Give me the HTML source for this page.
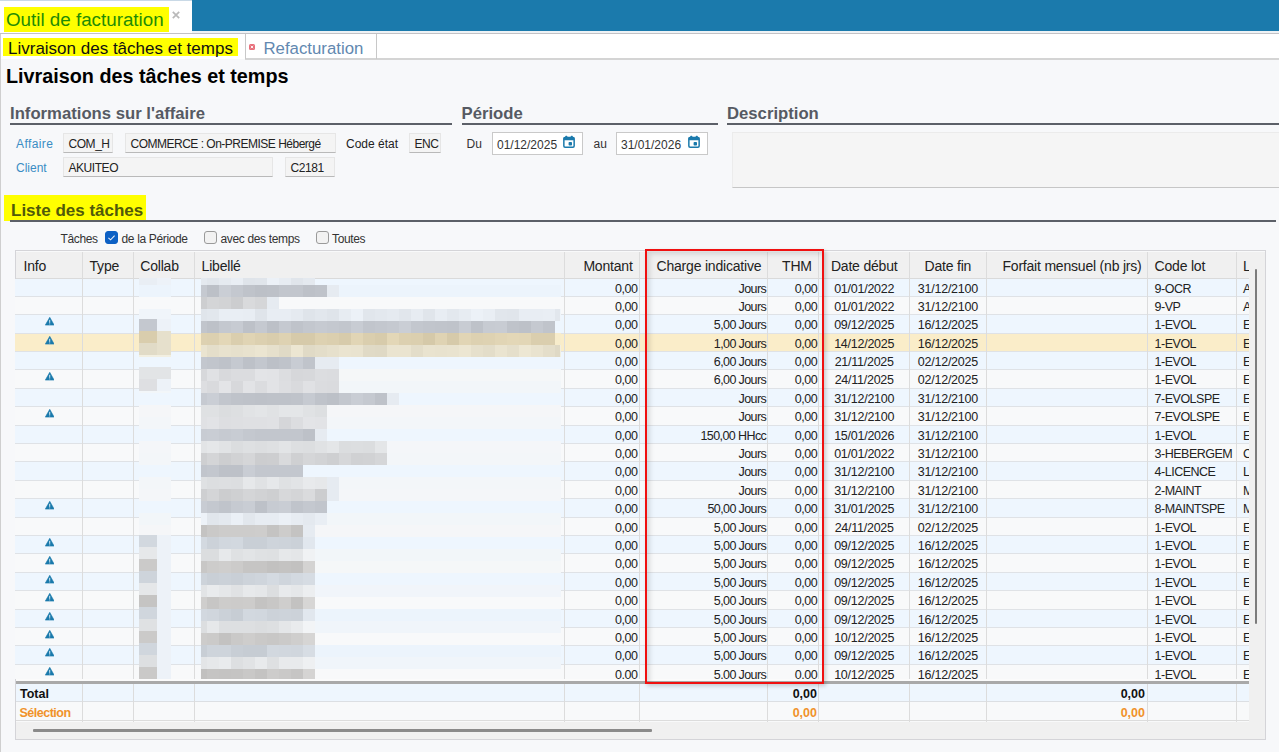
<!DOCTYPE html>
<html><head><meta charset="utf-8"><style>
*{margin:0;padding:0;box-sizing:border-box}
html,body{width:1279px;height:752px;overflow:hidden;background:#f7f8fa;font-family:"Liberation Sans",sans-serif;color:#333}
.a{position:absolute}
i{position:absolute;display:block}
.topbar{left:0;top:0;width:1279px;height:31px;background:#1b7aac}
.tab1{left:0;top:0;width:192px;height:33px;background:#fff;border-top:1px solid #c9d9e6}
.hl{background:#ffff00}
.row{position:absolute;left:15px;width:1234px;height:18.37px;border-bottom:1px solid #dfe2e6}
.row .c,.row .ic{position:absolute;top:0;height:18px;line-height:19px;font-size:12.5px;letter-spacing:-0.25px;white-space:nowrap;color:#222}
.row .c{top:1px}
.row .c{margin-left:-15px}
.row .ic{margin-left:-15px;text-align:center}
.row .ic svg{position:absolute;left:29.8px;top:2px}
.r{text-align:right}
.ctr{text-align:center}
.h{position:absolute;top:253px;height:26px;line-height:27px;font-size:14px;letter-spacing:-0.2px;white-space:nowrap;color:#222}
.vl{width:1px;background:#dcdcdc}
.ro{position:absolute;height:20px;background:#f4f4f4;border:1px solid #e6e6e6;border-bottom:1px solid #b9b9b9;font-size:12px;line-height:21.5px;padding-left:4.5px;color:#222;white-space:nowrap;letter-spacing:-0.45px}
.lbl{position:absolute;font-size:12px;line-height:14px;white-space:nowrap;margin-top:1.5px}
.sec{position:absolute;font-weight:bold;font-size:16.7px;color:#565a63;line-height:20px;white-space:nowrap;margin-top:1.5px}
.ul{height:2px;background:#5c6068}
.date{position:absolute;height:23px;background:#fff;border:1px solid #c9c9c9;font-size:12px;line-height:24px;padding-left:4px;white-space:nowrap}
.date svg{position:absolute;right:7px;top:2.3px}
.cb{position:absolute;top:231px;width:13px;height:13px;border:1.2px solid #9a9a9a;border-radius:3px;background:#f2f2f2}
</style></head><body>
<!-- top tab bar -->
<div class="a topbar"></div>
<div class="a tab1"></div>
<div class="a hl" style="left:4px;top:7px;width:165px;height:25px"></div>
<div class="a" style="left:6px;top:7px;font-size:18.8px;line-height:26px;color:#1f8c05;white-space:nowrap">Outil de facturation</div>
<svg class="a" style="left:172px;top:11px" width="8" height="8" viewBox="0 0 8 8"><path d="M0.8 0.8 L7.2 7.2 M7.2 0.8 L0.8 7.2" stroke="#b9b9b9" stroke-width="1.7"/></svg>
<i style="left:192px;top:31px;width:1087px;height:2px;background:#eef2f5"></i>
<i style="left:0;top:33px;width:1279px;height:1px;background:#c2c2c6"></i>
<!-- second tab row -->
<i style="left:0;top:34px;width:1279px;height:25px;background:#fff"></i>
<i style="left:245px;top:58px;width:1034px;height:1.5px;background:#d4d4d4"></i>
<i style="left:0;top:34px;width:1px;height:718px;background:#cfcfcf"></i>
<div class="a hl" style="left:3px;top:38px;width:235px;height:18px"></div>
<div class="a" style="left:8px;top:39px;font-size:17px;line-height:20px;color:#111;white-space:nowrap">Livraison des tâches et temps</div>
<i style="left:245px;top:34px;width:1px;height:25px;background:#c8c8c8"></i>
<i style="left:376px;top:34px;width:1px;height:25px;background:#c8c8c8"></i>
<div class="a" style="left:249px;top:43.5px;width:6px;height:6px;border-radius:1.5px;background:#e8707c"></div>
<svg class="a" style="left:249px;top:43.5px" width="6" height="6" viewBox="0 0 6 6"><path d="M1.8 1.8 L4.2 4.2 M4.2 1.8 L1.8 4.2" stroke="#fff" stroke-width="0.9"/></svg>
<div class="a" style="left:263.5px;top:38.5px;font-size:16.8px;line-height:20px;color:#6288b0;white-space:nowrap">Refacturation</div>
<!-- page heading -->
<div class="a" style="left:6px;top:65px;font-size:19.8px;font-weight:bold;color:#000;line-height:22px;white-space:nowrap">Livraison des tâches et temps</div>
<!-- section headers -->
<div class="sec" style="left:10px;top:102px">Informations sur l'affaire</div>
<i class="ul" style="left:10px;top:122.5px;width:442px"></i>
<div class="sec" style="left:461.5px;top:102px">Période</div>
<i class="ul" style="left:461.5px;top:122.5px;width:256px"></i>
<div class="sec" style="left:727px;top:102px">Description</div>
<i class="ul" style="left:727px;top:122.5px;width:552px"></i>
<!-- affaire fields -->
<div class="lbl" style="left:16px;top:135.5px;color:#3a8dc4;letter-spacing:0.4px">Affaire</div>
<div class="ro" style="left:63px;top:132.5px;width:50px">COM_H</div>
<div class="ro" style="left:125px;top:132.5px;width:211px"><span style="letter-spacing:-0.5px">COMMERCE : On-PREMISE Hébergé</span></div>
<div class="lbl" style="left:346px;top:135px;color:#222">Code état</div>
<div class="ro" style="left:409px;top:132.5px;width:32px">ENC</div>
<div class="lbl" style="left:16px;top:159.5px;color:#3a8dc4">Client</div>
<div class="ro" style="left:63px;top:156.5px;width:210px">AKUITEO</div>
<div class="ro" style="left:285px;top:156.5px;width:50px">C2181</div>
<!-- periode -->
<div class="lbl" style="left:466.5px;top:135.5px">Du</div>
<div class="date" style="left:492px;top:132px;width:91px">01/12/2025<svg width="12" height="13" viewBox="0 0 12 13"><rect x="0.85" y="2.6" width="10.3" height="9.6" rx="1.2" fill="none" stroke="#1b7aac" stroke-width="1.5"/><rect x="0.6" y="2.2" width="10.8" height="3" rx="0.8" fill="#1b7aac"/><rect x="2.4" y="0.8" width="1.8" height="2.5" rx="0.5" fill="#1b7aac"/><rect x="7.9" y="0.8" width="1.8" height="2.5" rx="0.5" fill="#1b7aac"/><rect x="5.6" y="7" width="3.4" height="3.6" rx="0.8" fill="#1b7aac"/></svg></div>
<div class="lbl" style="left:593.5px;top:135.5px">au</div>
<div class="date" style="left:616px;top:132px;width:92px">31/01/2026<svg width="12" height="13" viewBox="0 0 12 13"><rect x="0.85" y="2.6" width="10.3" height="9.6" rx="1.2" fill="none" stroke="#1b7aac" stroke-width="1.5"/><rect x="0.6" y="2.2" width="10.8" height="3" rx="0.8" fill="#1b7aac"/><rect x="2.4" y="0.8" width="1.8" height="2.5" rx="0.5" fill="#1b7aac"/><rect x="7.9" y="0.8" width="1.8" height="2.5" rx="0.5" fill="#1b7aac"/><rect x="5.6" y="7" width="3.4" height="3.6" rx="0.8" fill="#1b7aac"/></svg></div>
<!-- description -->
<div class="a" style="left:732px;top:132px;width:547px;height:56px;background:#f5f5f5;border-top:1px solid #ebebeb;border-bottom:1.5px solid #c6c6c6;border-left:1px solid #ececec"></div>
<!-- liste des taches -->
<div class="a hl" style="left:4px;top:195px;width:142px;height:26px"></div>
<div class="sec" style="left:11px;top:199.5px;font-size:17px;color:#505a0a">Liste des tâches</div>
<i class="ul" style="left:10px;top:220px;width:1266px"></i>
<div class="lbl" style="left:60.5px;top:230.5px;font-size:12px;letter-spacing:-0.35px">Tâches</div>
<div class="cb" style="left:105px;background:#0c60c4;border-color:#0c60c4"><svg width="11" height="11" viewBox="0 0 11 11" style="position:absolute;left:0;top:0"><path d="M2.4 5.8 L4.6 7.8 L8.6 3.6" fill="none" stroke="#e8eef8" stroke-width="1.1"/></svg></div>
<div class="lbl" style="left:121.5px;top:230.5px;font-size:12px;letter-spacing:-0.35px">de la Période</div>
<div class="cb" style="left:204px"></div>
<div class="lbl" style="left:220.5px;top:230.5px;font-size:12px;letter-spacing:-0.35px">avec des temps</div>
<div class="cb" style="left:315.5px"></div>
<div class="lbl" style="left:332px;top:230.5px;font-size:12px;letter-spacing:-0.35px">Toutes</div>
<!-- table frame -->
<div class="a" style="left:14.6px;top:250px;width:1251.4px;height:490px;border:1.4px solid #d4d4d8;background:#f8f9fa"></div>
<i style="left:15.5px;top:251.5px;width:1233px;height:27.5px;background:#f0f0f0;border-bottom:1px solid #dadada"></i>
<i style="left:1249px;top:251.5px;width:15.5px;height:470px;background:#f0f0f0"></i>
<i style="left:1255px;top:269px;width:2.4px;height:355px;background:#7c7c7c;border-radius:1px"></i>
<div class="a" style="left:0;top:0;width:1249px;height:279px;overflow:hidden"><i class="vl" style="left:82.0px;top:251.5px;height:27.5px"></i><i class="vl" style="left:132.8px;top:251.5px;height:27.5px"></i><i class="vl" style="left:194.1px;top:251.5px;height:27.5px"></i><i class="vl" style="left:563.9px;top:251.5px;height:27.5px"></i><i class="vl" style="left:639.1px;top:251.5px;height:27.5px"></i><i class="vl" style="left:767.3px;top:251.5px;height:27.5px"></i><i class="vl" style="left:818.3px;top:251.5px;height:27.5px"></i><i class="vl" style="left:909.1px;top:251.5px;height:27.5px"></i><i class="vl" style="left:985.7px;top:251.5px;height:27.5px"></i><i class="vl" style="left:1147.1px;top:251.5px;height:27.5px"></i><i class="vl" style="left:1236.4px;top:251.5px;height:27.5px"></i>
<span class="h" style="left:23.5px">Info</span><span class="h" style="left:89.5px">Type</span><span class="h" style="left:140.3px">Collab</span><span class="h" style="left:201.6px">Libellé</span><span class="h r" style="left:564.4px;width:68.20000000000005px">Montant</span><span class="h r" style="left:639.6px;width:121.69999999999993px">Charge indicative</span><span class="h r" style="left:767.8px;width:44.0px">THM</span><span class="h ctr" style="left:818.8px;width:90.80000000000007px">Date début</span><span class="h ctr" style="left:909.6px;width:76.60000000000002px">Date fin</span><span class="h r" style="left:986.2px;width:155.39999999999986px">Forfait mensuel (nb jrs)</span><span class="h" style="left:1154.6px">Code lot</span><span class="h" style="left:1242.9px">L</span></div>
<div class="a" style="left:0;top:0;width:1249px;height:679px;overflow:hidden">
<div class="row" style="top:279px;height:18px;background:#eef6fe"><span class="c r" style="left:564.4px;width:73.20000000000005px;letter-spacing:-0.45px">0,00</span><span class="c r" style="left:639.6px;width:126.59999999999994px;letter-spacing:-0.6px">Jours</span><span class="c r" style="left:767.8px;width:49.5px;letter-spacing:-0.45px">0,00</span><span class="c ctr" style="left:818.8px;width:90.80000000000007px">01/01/2022</span><span class="c ctr" style="left:909.6px;width:76.60000000000002px">31/12/2100</span><span class="c" style="left:1154.6px;letter-spacing:-0.5px">9-OCR</span><span class="c" style="left:1242.9px;letter-spacing:-0.25px">A</span></div>
<div class="row" style="top:297px;height:18px;background:#f8f9fa"><span class="c r" style="left:564.4px;width:73.20000000000005px;letter-spacing:-0.45px">0,00</span><span class="c r" style="left:639.6px;width:126.59999999999994px;letter-spacing:-0.6px">Jours</span><span class="c r" style="left:767.8px;width:49.5px;letter-spacing:-0.45px">0,00</span><span class="c ctr" style="left:818.8px;width:90.80000000000007px">01/01/2022</span><span class="c ctr" style="left:909.6px;width:76.60000000000002px">31/12/2100</span><span class="c" style="left:1154.6px;letter-spacing:-0.5px">9-VP</span><span class="c" style="left:1242.9px;letter-spacing:-0.25px">A</span></div>
<div class="row" style="top:315px;height:19px;background:#eef6fe"><span class="ic" style="left:15px;width:67.5px"><svg class="warn" width="9.5" height="8.5" viewBox="0 0 10 9"><path d="M5 0.3 L9.7 8.6 L0.3 8.6 Z" fill="#1a7aac" stroke="#1a7aac" stroke-width="0.6" stroke-linejoin="round"/><rect x="4.55" y="3" width="0.9" height="3.2" fill="#fff"/><rect x="4.55" y="6.9" width="0.9" height="0.9" fill="#fff"/></svg></span><span class="c r" style="left:564.4px;width:73.20000000000005px;letter-spacing:-0.45px">0,00</span><span class="c r" style="left:639.6px;width:126.59999999999994px;letter-spacing:-0.6px">5,00 Jours</span><span class="c r" style="left:767.8px;width:49.5px;letter-spacing:-0.45px">0,00</span><span class="c ctr" style="left:818.8px;width:90.80000000000007px">09/12/2025</span><span class="c ctr" style="left:909.6px;width:76.60000000000002px">16/12/2025</span><span class="c" style="left:1154.6px;letter-spacing:-0.5px">1-EVOL</span><span class="c" style="left:1242.9px;letter-spacing:-0.25px">E</span></div>
<div class="row" style="top:334px;height:18px;background:#faedc9"><span class="ic" style="left:15px;width:67.5px"><svg class="warn" width="9.5" height="8.5" viewBox="0 0 10 9"><path d="M5 0.3 L9.7 8.6 L0.3 8.6 Z" fill="#1a7aac" stroke="#1a7aac" stroke-width="0.6" stroke-linejoin="round"/><rect x="4.55" y="3" width="0.9" height="3.2" fill="#fff"/><rect x="4.55" y="6.9" width="0.9" height="0.9" fill="#fff"/></svg></span><span class="c r" style="left:564.4px;width:73.20000000000005px;letter-spacing:-0.45px">0,00</span><span class="c r" style="left:639.6px;width:126.59999999999994px;letter-spacing:-0.6px">1,00 Jours</span><span class="c r" style="left:767.8px;width:49.5px;letter-spacing:-0.45px">0,00</span><span class="c ctr" style="left:818.8px;width:90.80000000000007px">14/12/2025</span><span class="c ctr" style="left:909.6px;width:76.60000000000002px">16/12/2025</span><span class="c" style="left:1154.6px;letter-spacing:-0.5px">1-EVOL</span><span class="c" style="left:1242.9px;letter-spacing:-0.25px">E</span></div>
<div class="row" style="top:352px;height:18px;background:#eef6fe"><span class="c r" style="left:564.4px;width:73.20000000000005px;letter-spacing:-0.45px">0,00</span><span class="c r" style="left:639.6px;width:126.59999999999994px;letter-spacing:-0.6px">6,00 Jours</span><span class="c r" style="left:767.8px;width:49.5px;letter-spacing:-0.45px">0,00</span><span class="c ctr" style="left:818.8px;width:90.80000000000007px">21/11/2025</span><span class="c ctr" style="left:909.6px;width:76.60000000000002px">02/12/2025</span><span class="c" style="left:1154.6px;letter-spacing:-0.5px">1-EVOL</span><span class="c" style="left:1242.9px;letter-spacing:-0.25px">E</span></div>
<div class="row" style="top:370px;height:19px;background:#f8f9fa"><span class="ic" style="left:15px;width:67.5px"><svg class="warn" width="9.5" height="8.5" viewBox="0 0 10 9"><path d="M5 0.3 L9.7 8.6 L0.3 8.6 Z" fill="#1a7aac" stroke="#1a7aac" stroke-width="0.6" stroke-linejoin="round"/><rect x="4.55" y="3" width="0.9" height="3.2" fill="#fff"/><rect x="4.55" y="6.9" width="0.9" height="0.9" fill="#fff"/></svg></span><span class="c r" style="left:564.4px;width:73.20000000000005px;letter-spacing:-0.45px">0,00</span><span class="c r" style="left:639.6px;width:126.59999999999994px;letter-spacing:-0.6px">6,00 Jours</span><span class="c r" style="left:767.8px;width:49.5px;letter-spacing:-0.45px">0,00</span><span class="c ctr" style="left:818.8px;width:90.80000000000007px">24/11/2025</span><span class="c ctr" style="left:909.6px;width:76.60000000000002px">02/12/2025</span><span class="c" style="left:1154.6px;letter-spacing:-0.5px">1-EVOL</span><span class="c" style="left:1242.9px;letter-spacing:-0.25px">E</span></div>
<div class="row" style="top:389px;height:18px;background:#eef6fe"><span class="c r" style="left:564.4px;width:73.20000000000005px;letter-spacing:-0.45px">0,00</span><span class="c r" style="left:639.6px;width:126.59999999999994px;letter-spacing:-0.6px">Jours</span><span class="c r" style="left:767.8px;width:49.5px;letter-spacing:-0.45px">0,00</span><span class="c ctr" style="left:818.8px;width:90.80000000000007px">31/12/2100</span><span class="c ctr" style="left:909.6px;width:76.60000000000002px">31/12/2100</span><span class="c" style="left:1154.6px;letter-spacing:-0.5px">7-EVOLSPE</span><span class="c" style="left:1242.9px;letter-spacing:-0.25px">E</span></div>
<div class="row" style="top:407px;height:19px;background:#f8f9fa"><span class="ic" style="left:15px;width:67.5px"><svg class="warn" width="9.5" height="8.5" viewBox="0 0 10 9"><path d="M5 0.3 L9.7 8.6 L0.3 8.6 Z" fill="#1a7aac" stroke="#1a7aac" stroke-width="0.6" stroke-linejoin="round"/><rect x="4.55" y="3" width="0.9" height="3.2" fill="#fff"/><rect x="4.55" y="6.9" width="0.9" height="0.9" fill="#fff"/></svg></span><span class="c r" style="left:564.4px;width:73.20000000000005px;letter-spacing:-0.45px">0,00</span><span class="c r" style="left:639.6px;width:126.59999999999994px;letter-spacing:-0.6px">Jours</span><span class="c r" style="left:767.8px;width:49.5px;letter-spacing:-0.45px">0,00</span><span class="c ctr" style="left:818.8px;width:90.80000000000007px">31/12/2100</span><span class="c ctr" style="left:909.6px;width:76.60000000000002px">31/12/2100</span><span class="c" style="left:1154.6px;letter-spacing:-0.5px">7-EVOLSPE</span><span class="c" style="left:1242.9px;letter-spacing:-0.25px">E</span></div>
<div class="row" style="top:426px;height:18px;background:#eef6fe"><span class="c r" style="left:564.4px;width:73.20000000000005px;letter-spacing:-0.45px">0,00</span><span class="c r" style="left:639.6px;width:126.59999999999994px;letter-spacing:-0.6px">150,00 HHcc</span><span class="c r" style="left:767.8px;width:49.5px;letter-spacing:-0.45px">0,00</span><span class="c ctr" style="left:818.8px;width:90.80000000000007px">15/01/2026</span><span class="c ctr" style="left:909.6px;width:76.60000000000002px">31/12/2100</span><span class="c" style="left:1154.6px;letter-spacing:-0.5px">1-EVOL</span><span class="c" style="left:1242.9px;letter-spacing:-0.25px">E</span></div>
<div class="row" style="top:444px;height:18px;background:#f8f9fa"><span class="c r" style="left:564.4px;width:73.20000000000005px;letter-spacing:-0.45px">0,00</span><span class="c r" style="left:639.6px;width:126.59999999999994px;letter-spacing:-0.6px">Jours</span><span class="c r" style="left:767.8px;width:49.5px;letter-spacing:-0.45px">0,00</span><span class="c ctr" style="left:818.8px;width:90.80000000000007px">01/01/2022</span><span class="c ctr" style="left:909.6px;width:76.60000000000002px">31/12/2100</span><span class="c" style="left:1154.6px;letter-spacing:-0.5px">3-HEBERGEM</span><span class="c" style="left:1242.9px;letter-spacing:-0.25px">C</span></div>
<div class="row" style="top:462px;height:19px;background:#eef6fe"><span class="c r" style="left:564.4px;width:73.20000000000005px;letter-spacing:-0.45px">0,00</span><span class="c r" style="left:639.6px;width:126.59999999999994px;letter-spacing:-0.6px">Jours</span><span class="c r" style="left:767.8px;width:49.5px;letter-spacing:-0.45px">0,00</span><span class="c ctr" style="left:818.8px;width:90.80000000000007px">31/12/2100</span><span class="c ctr" style="left:909.6px;width:76.60000000000002px">31/12/2100</span><span class="c" style="left:1154.6px;letter-spacing:-0.5px">4-LICENCE</span><span class="c" style="left:1242.9px;letter-spacing:-0.25px">L</span></div>
<div class="row" style="top:481px;height:18px;background:#f8f9fa"><span class="c r" style="left:564.4px;width:73.20000000000005px;letter-spacing:-0.45px">0,00</span><span class="c r" style="left:639.6px;width:126.59999999999994px;letter-spacing:-0.6px">Jours</span><span class="c r" style="left:767.8px;width:49.5px;letter-spacing:-0.45px">0,00</span><span class="c ctr" style="left:818.8px;width:90.80000000000007px">31/12/2100</span><span class="c ctr" style="left:909.6px;width:76.60000000000002px">31/12/2100</span><span class="c" style="left:1154.6px;letter-spacing:-0.5px">2-MAINT</span><span class="c" style="left:1242.9px;letter-spacing:-0.25px">M</span></div>
<div class="row" style="top:499px;height:19px;background:#eef6fe"><span class="ic" style="left:15px;width:67.5px"><svg class="warn" width="9.5" height="8.5" viewBox="0 0 10 9"><path d="M5 0.3 L9.7 8.6 L0.3 8.6 Z" fill="#1a7aac" stroke="#1a7aac" stroke-width="0.6" stroke-linejoin="round"/><rect x="4.55" y="3" width="0.9" height="3.2" fill="#fff"/><rect x="4.55" y="6.9" width="0.9" height="0.9" fill="#fff"/></svg></span><span class="c r" style="left:564.4px;width:73.20000000000005px;letter-spacing:-0.45px">0,00</span><span class="c r" style="left:639.6px;width:126.59999999999994px;letter-spacing:-0.6px">50,00 Jours</span><span class="c r" style="left:767.8px;width:49.5px;letter-spacing:-0.45px">0,00</span><span class="c ctr" style="left:818.8px;width:90.80000000000007px">31/01/2025</span><span class="c ctr" style="left:909.6px;width:76.60000000000002px">31/12/2100</span><span class="c" style="left:1154.6px;letter-spacing:-0.5px">8-MAINTSPE</span><span class="c" style="left:1242.9px;letter-spacing:-0.25px">M</span></div>
<div class="row" style="top:518px;height:18px;background:#f8f9fa"><span class="c r" style="left:564.4px;width:73.20000000000005px;letter-spacing:-0.45px">0,00</span><span class="c r" style="left:639.6px;width:126.59999999999994px;letter-spacing:-0.6px">5,00 Jours</span><span class="c r" style="left:767.8px;width:49.5px;letter-spacing:-0.45px">0,00</span><span class="c ctr" style="left:818.8px;width:90.80000000000007px">24/11/2025</span><span class="c ctr" style="left:909.6px;width:76.60000000000002px">02/12/2025</span><span class="c" style="left:1154.6px;letter-spacing:-0.5px">1-EVOL</span><span class="c" style="left:1242.9px;letter-spacing:-0.25px">E</span></div>
<div class="row" style="top:536px;height:18px;background:#eef6fe"><span class="ic" style="left:15px;width:67.5px"><svg class="warn" width="9.5" height="8.5" viewBox="0 0 10 9"><path d="M5 0.3 L9.7 8.6 L0.3 8.6 Z" fill="#1a7aac" stroke="#1a7aac" stroke-width="0.6" stroke-linejoin="round"/><rect x="4.55" y="3" width="0.9" height="3.2" fill="#fff"/><rect x="4.55" y="6.9" width="0.9" height="0.9" fill="#fff"/></svg></span><span class="c r" style="left:564.4px;width:73.20000000000005px;letter-spacing:-0.45px">0,00</span><span class="c r" style="left:639.6px;width:126.59999999999994px;letter-spacing:-0.6px">5,00 Jours</span><span class="c r" style="left:767.8px;width:49.5px;letter-spacing:-0.45px">0,00</span><span class="c ctr" style="left:818.8px;width:90.80000000000007px">09/12/2025</span><span class="c ctr" style="left:909.6px;width:76.60000000000002px">16/12/2025</span><span class="c" style="left:1154.6px;letter-spacing:-0.5px">1-EVOL</span><span class="c" style="left:1242.9px;letter-spacing:-0.25px">E</span></div>
<div class="row" style="top:554px;height:19px;background:#f8f9fa"><span class="ic" style="left:15px;width:67.5px"><svg class="warn" width="9.5" height="8.5" viewBox="0 0 10 9"><path d="M5 0.3 L9.7 8.6 L0.3 8.6 Z" fill="#1a7aac" stroke="#1a7aac" stroke-width="0.6" stroke-linejoin="round"/><rect x="4.55" y="3" width="0.9" height="3.2" fill="#fff"/><rect x="4.55" y="6.9" width="0.9" height="0.9" fill="#fff"/></svg></span><span class="c r" style="left:564.4px;width:73.20000000000005px;letter-spacing:-0.45px">0,00</span><span class="c r" style="left:639.6px;width:126.59999999999994px;letter-spacing:-0.6px">5,00 Jours</span><span class="c r" style="left:767.8px;width:49.5px;letter-spacing:-0.45px">0,00</span><span class="c ctr" style="left:818.8px;width:90.80000000000007px">09/12/2025</span><span class="c ctr" style="left:909.6px;width:76.60000000000002px">16/12/2025</span><span class="c" style="left:1154.6px;letter-spacing:-0.5px">1-EVOL</span><span class="c" style="left:1242.9px;letter-spacing:-0.25px">E</span></div>
<div class="row" style="top:573px;height:18px;background:#eef6fe"><span class="ic" style="left:15px;width:67.5px"><svg class="warn" width="9.5" height="8.5" viewBox="0 0 10 9"><path d="M5 0.3 L9.7 8.6 L0.3 8.6 Z" fill="#1a7aac" stroke="#1a7aac" stroke-width="0.6" stroke-linejoin="round"/><rect x="4.55" y="3" width="0.9" height="3.2" fill="#fff"/><rect x="4.55" y="6.9" width="0.9" height="0.9" fill="#fff"/></svg></span><span class="c r" style="left:564.4px;width:73.20000000000005px;letter-spacing:-0.45px">0,00</span><span class="c r" style="left:639.6px;width:126.59999999999994px;letter-spacing:-0.6px">5,00 Jours</span><span class="c r" style="left:767.8px;width:49.5px;letter-spacing:-0.45px">0,00</span><span class="c ctr" style="left:818.8px;width:90.80000000000007px">09/12/2025</span><span class="c ctr" style="left:909.6px;width:76.60000000000002px">16/12/2025</span><span class="c" style="left:1154.6px;letter-spacing:-0.5px">1-EVOL</span><span class="c" style="left:1242.9px;letter-spacing:-0.25px">E</span></div>
<div class="row" style="top:591px;height:19px;background:#f8f9fa"><span class="ic" style="left:15px;width:67.5px"><svg class="warn" width="9.5" height="8.5" viewBox="0 0 10 9"><path d="M5 0.3 L9.7 8.6 L0.3 8.6 Z" fill="#1a7aac" stroke="#1a7aac" stroke-width="0.6" stroke-linejoin="round"/><rect x="4.55" y="3" width="0.9" height="3.2" fill="#fff"/><rect x="4.55" y="6.9" width="0.9" height="0.9" fill="#fff"/></svg></span><span class="c r" style="left:564.4px;width:73.20000000000005px;letter-spacing:-0.45px">0,00</span><span class="c r" style="left:639.6px;width:126.59999999999994px;letter-spacing:-0.6px">5,00 Jours</span><span class="c r" style="left:767.8px;width:49.5px;letter-spacing:-0.45px">0,00</span><span class="c ctr" style="left:818.8px;width:90.80000000000007px">09/12/2025</span><span class="c ctr" style="left:909.6px;width:76.60000000000002px">16/12/2025</span><span class="c" style="left:1154.6px;letter-spacing:-0.5px">1-EVOL</span><span class="c" style="left:1242.9px;letter-spacing:-0.25px">E</span></div>
<div class="row" style="top:610px;height:18px;background:#eef6fe"><span class="ic" style="left:15px;width:67.5px"><svg class="warn" width="9.5" height="8.5" viewBox="0 0 10 9"><path d="M5 0.3 L9.7 8.6 L0.3 8.6 Z" fill="#1a7aac" stroke="#1a7aac" stroke-width="0.6" stroke-linejoin="round"/><rect x="4.55" y="3" width="0.9" height="3.2" fill="#fff"/><rect x="4.55" y="6.9" width="0.9" height="0.9" fill="#fff"/></svg></span><span class="c r" style="left:564.4px;width:73.20000000000005px;letter-spacing:-0.45px">0,00</span><span class="c r" style="left:639.6px;width:126.59999999999994px;letter-spacing:-0.6px">5,00 Jours</span><span class="c r" style="left:767.8px;width:49.5px;letter-spacing:-0.45px">0,00</span><span class="c ctr" style="left:818.8px;width:90.80000000000007px">09/12/2025</span><span class="c ctr" style="left:909.6px;width:76.60000000000002px">16/12/2025</span><span class="c" style="left:1154.6px;letter-spacing:-0.5px">1-EVOL</span><span class="c" style="left:1242.9px;letter-spacing:-0.25px">E</span></div>
<div class="row" style="top:628px;height:18px;background:#f8f9fa"><span class="ic" style="left:15px;width:67.5px"><svg class="warn" width="9.5" height="8.5" viewBox="0 0 10 9"><path d="M5 0.3 L9.7 8.6 L0.3 8.6 Z" fill="#1a7aac" stroke="#1a7aac" stroke-width="0.6" stroke-linejoin="round"/><rect x="4.55" y="3" width="0.9" height="3.2" fill="#fff"/><rect x="4.55" y="6.9" width="0.9" height="0.9" fill="#fff"/></svg></span><span class="c r" style="left:564.4px;width:73.20000000000005px;letter-spacing:-0.45px">0,00</span><span class="c r" style="left:639.6px;width:126.59999999999994px;letter-spacing:-0.6px">5,00 Jours</span><span class="c r" style="left:767.8px;width:49.5px;letter-spacing:-0.45px">0,00</span><span class="c ctr" style="left:818.8px;width:90.80000000000007px">10/12/2025</span><span class="c ctr" style="left:909.6px;width:76.60000000000002px">16/12/2025</span><span class="c" style="left:1154.6px;letter-spacing:-0.5px">1-EVOL</span><span class="c" style="left:1242.9px;letter-spacing:-0.25px">E</span></div>
<div class="row" style="top:646px;height:19px;background:#eef6fe"><span class="ic" style="left:15px;width:67.5px"><svg class="warn" width="9.5" height="8.5" viewBox="0 0 10 9"><path d="M5 0.3 L9.7 8.6 L0.3 8.6 Z" fill="#1a7aac" stroke="#1a7aac" stroke-width="0.6" stroke-linejoin="round"/><rect x="4.55" y="3" width="0.9" height="3.2" fill="#fff"/><rect x="4.55" y="6.9" width="0.9" height="0.9" fill="#fff"/></svg></span><span class="c r" style="left:564.4px;width:73.20000000000005px;letter-spacing:-0.45px">0,00</span><span class="c r" style="left:639.6px;width:126.59999999999994px;letter-spacing:-0.6px">5,00 Jours</span><span class="c r" style="left:767.8px;width:49.5px;letter-spacing:-0.45px">0,00</span><span class="c ctr" style="left:818.8px;width:90.80000000000007px">09/12/2025</span><span class="c ctr" style="left:909.6px;width:76.60000000000002px">16/12/2025</span><span class="c" style="left:1154.6px;letter-spacing:-0.5px">1-EVOL</span><span class="c" style="left:1242.9px;letter-spacing:-0.25px">E</span></div>
<div class="row" style="top:665px;height:18px;background:#f8f9fa"><span class="ic" style="left:15px;width:67.5px"><svg class="warn" width="9.5" height="8.5" viewBox="0 0 10 9"><path d="M5 0.3 L9.7 8.6 L0.3 8.6 Z" fill="#1a7aac" stroke="#1a7aac" stroke-width="0.6" stroke-linejoin="round"/><rect x="4.55" y="3" width="0.9" height="3.2" fill="#fff"/><rect x="4.55" y="6.9" width="0.9" height="0.9" fill="#fff"/></svg></span><span class="c r" style="left:564.4px;width:73.20000000000005px;letter-spacing:-0.45px">0.00</span><span class="c r" style="left:639.6px;width:126.59999999999994px;letter-spacing:-0.6px">5.00 Jours</span><span class="c r" style="left:767.8px;width:49.5px;letter-spacing:-0.45px">0.00</span><span class="c ctr" style="left:818.8px;width:90.80000000000007px">10/12/2025</span><span class="c ctr" style="left:909.6px;width:76.60000000000002px">16/12/2025</span><span class="c" style="left:1154.6px;letter-spacing:-0.5px">1-EVOL</span><span class="c" style="left:1242.9px;letter-spacing:-0.25px">E</span></div>
<i class="vl" style="left:82.0px;top:279px;height:400px"></i><i class="vl" style="left:132.8px;top:279px;height:400px"></i><i class="vl" style="left:194.1px;top:279px;height:400px"></i><i class="vl" style="left:563.9px;top:279px;height:400px"></i><i class="vl" style="left:639.1px;top:279px;height:400px"></i><i class="vl" style="left:767.3px;top:279px;height:400px"></i><i class="vl" style="left:818.3px;top:279px;height:400px"></i><i class="vl" style="left:909.1px;top:279px;height:400px"></i><i class="vl" style="left:985.7px;top:279px;height:400px"></i><i class="vl" style="left:1147.1px;top:279px;height:400px"></i><i class="vl" style="left:1236.4px;top:279px;height:400px"></i>
<i style="left:201px;top:279px;width:360px;height:6px;background:#eef6fe"></i>
<i style="left:139px;top:279px;width:32px;height:6px;background:#eef6fe"></i>
<i style="left:201px;top:285px;width:360px;height:12px;background:#ecf4fc"></i>
<i style="left:139px;top:285px;width:32px;height:12px;background:#ecf4fc"></i>
<i style="left:201px;top:297px;width:360px;height:12px;background:#f8f9fa"></i>
<i style="left:139px;top:297px;width:32px;height:12px;background:#f8f9fa"></i>
<i style="left:201px;top:309px;width:360px;height:12px;background:#f0f5fa"></i>
<i style="left:139px;top:309px;width:32px;height:12px;background:#f0f5fa"></i>
<i style="left:201px;top:321px;width:360px;height:12px;background:#eef6fe"></i>
<i style="left:139px;top:321px;width:32px;height:12px;background:#eef6fe"></i>
<i style="left:201px;top:333px;width:360px;height:12px;background:#f7eccb"></i>
<i style="left:139px;top:333px;width:32px;height:12px;background:#f7eccb"></i>
<i style="left:201px;top:345px;width:360px;height:12px;background:#f2efe1"></i>
<i style="left:139px;top:345px;width:32px;height:12px;background:#f2efe1"></i>
<i style="left:201px;top:357px;width:360px;height:12px;background:#eef6fe"></i>
<i style="left:139px;top:357px;width:32px;height:12px;background:#eef6fe"></i>
<i style="left:201px;top:369px;width:360px;height:12px;background:#f5f7f8"></i>
<i style="left:139px;top:369px;width:32px;height:12px;background:#f5f7f8"></i>
<i style="left:201px;top:381px;width:360px;height:12px;background:#f2f6f9"></i>
<i style="left:139px;top:381px;width:32px;height:12px;background:#f2f6f9"></i>
<i style="left:201px;top:393px;width:360px;height:12px;background:#eef6fe"></i>
<i style="left:139px;top:393px;width:32px;height:12px;background:#eef6fe"></i>
<i style="left:201px;top:405px;width:360px;height:12px;background:#f5f6f8"></i>
<i style="left:139px;top:405px;width:32px;height:12px;background:#f5f6f8"></i>
<i style="left:201px;top:417px;width:360px;height:12px;background:#f3f6f9"></i>
<i style="left:139px;top:417px;width:32px;height:12px;background:#f3f6f9"></i>
<i style="left:201px;top:429px;width:360px;height:12px;background:#eef6fe"></i>
<i style="left:139px;top:429px;width:32px;height:12px;background:#eef6fe"></i>
<i style="left:201px;top:441px;width:360px;height:12px;background:#f4f6f9"></i>
<i style="left:139px;top:441px;width:32px;height:12px;background:#f4f6f9"></i>
<i style="left:201px;top:453px;width:360px;height:12px;background:#f3f6f9"></i>
<i style="left:139px;top:453px;width:32px;height:12px;background:#f3f6f9"></i>
<i style="left:201px;top:465px;width:360px;height:12px;background:#eef6fe"></i>
<i style="left:139px;top:465px;width:32px;height:12px;background:#eef6fe"></i>
<i style="left:201px;top:477px;width:360px;height:12px;background:#f3f6f9"></i>
<i style="left:139px;top:477px;width:32px;height:12px;background:#f3f6f9"></i>
<i style="left:201px;top:489px;width:360px;height:12px;background:#f4f6f9"></i>
<i style="left:139px;top:489px;width:32px;height:12px;background:#f4f6f9"></i>
<i style="left:201px;top:501px;width:360px;height:12px;background:#eef6fe"></i>
<i style="left:139px;top:501px;width:32px;height:12px;background:#eef6fe"></i>
<i style="left:201px;top:513px;width:360px;height:12px;background:#f2f6f9"></i>
<i style="left:139px;top:513px;width:32px;height:12px;background:#f2f6f9"></i>
<i style="left:201px;top:525px;width:360px;height:12px;background:#f5f6f8"></i>
<i style="left:139px;top:525px;width:32px;height:12px;background:#f5f6f8"></i>
<i style="left:201px;top:537px;width:360px;height:12px;background:#eef6fe"></i>
<i style="left:139px;top:537px;width:32px;height:12px;background:#eef6fe"></i>
<i style="left:201px;top:549px;width:360px;height:12px;background:#f2f6f9"></i>
<i style="left:139px;top:549px;width:32px;height:12px;background:#f2f6f9"></i>
<i style="left:201px;top:561px;width:360px;height:12px;background:#f5f7f8"></i>
<i style="left:139px;top:561px;width:32px;height:12px;background:#f5f7f8"></i>
<i style="left:201px;top:573px;width:360px;height:12px;background:#eef6fe"></i>
<i style="left:139px;top:573px;width:32px;height:12px;background:#eef6fe"></i>
<i style="left:201px;top:585px;width:360px;height:12px;background:#f1f5fa"></i>
<i style="left:139px;top:585px;width:32px;height:12px;background:#f1f5fa"></i>
<i style="left:201px;top:597px;width:360px;height:12px;background:#f8f9fa"></i>
<i style="left:139px;top:597px;width:32px;height:12px;background:#f8f9fa"></i>
<i style="left:201px;top:609px;width:360px;height:12px;background:#ecf4fc"></i>
<i style="left:139px;top:609px;width:32px;height:12px;background:#ecf4fc"></i>
<i style="left:201px;top:621px;width:360px;height:12px;background:#f0f5fa"></i>
<i style="left:139px;top:621px;width:32px;height:12px;background:#f0f5fa"></i>
<i style="left:201px;top:633px;width:360px;height:12px;background:#f8f9fa"></i>
<i style="left:139px;top:633px;width:32px;height:12px;background:#f8f9fa"></i>
<i style="left:201px;top:645px;width:360px;height:12px;background:#ecf4fc"></i>
<i style="left:139px;top:645px;width:32px;height:12px;background:#ecf4fc"></i>
<i style="left:201px;top:657px;width:360px;height:12px;background:#f0f5fa"></i>
<i style="left:139px;top:657px;width:32px;height:12px;background:#f0f5fa"></i>
<i style="left:201px;top:669px;width:360px;height:10px;background:#f8f9fa"></i>
<i style="left:139px;top:669px;width:32px;height:10px;background:#f8f9fa"></i>
<i style="left:201px;top:278px;width:6px;height:7px;background:#e4e9ef"></i>
<i style="left:207px;top:278px;width:12px;height:7px;background:#e1e6ec"></i>
<i style="left:219px;top:278px;width:12px;height:7px;background:#e5eaf0"></i>
<i style="left:231px;top:278px;width:12px;height:7px;background:#e9eef4"></i>
<i style="left:243px;top:278px;width:12px;height:7px;background:#dfe4ea"></i>
<i style="left:255px;top:278px;width:12px;height:7px;background:#e0e5eb"></i>
<i style="left:267px;top:278px;width:12px;height:7px;background:#ecf1f7"></i>
<i style="left:279px;top:278px;width:12px;height:7px;background:#e7ecf2"></i>
<i style="left:291px;top:278px;width:12px;height:7px;background:#e0e5eb"></i>
<i style="left:303px;top:278px;width:12px;height:7px;background:#e4e9ef"></i>
<i style="left:201px;top:285px;width:6px;height:12px;background:#c5c9d0"></i>
<i style="left:207px;top:285px;width:12px;height:12px;background:#bcc0c7"></i>
<i style="left:219px;top:285px;width:12px;height:12px;background:#caced5"></i>
<i style="left:231px;top:285px;width:12px;height:12px;background:#c4c8cf"></i>
<i style="left:243px;top:285px;width:12px;height:12px;background:#bfc3ca"></i>
<i style="left:255px;top:285px;width:12px;height:12px;background:#bcc0c7"></i>
<i style="left:267px;top:285px;width:12px;height:12px;background:#bdc1c8"></i>
<i style="left:279px;top:285px;width:12px;height:12px;background:#c2c6cd"></i>
<i style="left:291px;top:285px;width:12px;height:12px;background:#c2c6cd"></i>
<i style="left:303px;top:285px;width:12px;height:12px;background:#bdc1c8"></i>
<i style="left:315px;top:285px;width:12px;height:12px;background:#bfc3ca"></i>
<i style="left:327px;top:285px;width:12px;height:12px;background:#e6ebf1"></i>
<i style="left:201px;top:297px;width:6px;height:12px;background:#cdced0"></i>
<i style="left:207px;top:297px;width:12px;height:12px;background:#d4d5d7"></i>
<i style="left:219px;top:297px;width:12px;height:12px;background:#d2d3d5"></i>
<i style="left:231px;top:297px;width:12px;height:12px;background:#cccdcf"></i>
<i style="left:243px;top:297px;width:12px;height:12px;background:#d9dadc"></i>
<i style="left:255px;top:297px;width:12px;height:12px;background:#d5d6d8"></i>
<i style="left:267px;top:297px;width:12px;height:12px;background:#e6ebf1"></i>
<i style="left:201px;top:309px;width:6px;height:12px;background:#e0e5eb"></i>
<i style="left:207px;top:309px;width:12px;height:12px;background:#e2e7ed"></i>
<i style="left:219px;top:309px;width:12px;height:12px;background:#e9eef4"></i>
<i style="left:231px;top:309px;width:12px;height:12px;background:#e9eef4"></i>
<i style="left:243px;top:309px;width:12px;height:12px;background:#e8edf3"></i>
<i style="left:255px;top:309px;width:12px;height:12px;background:#dfe4ea"></i>
<i style="left:267px;top:309px;width:12px;height:12px;background:#e8edf3"></i>
<i style="left:279px;top:309px;width:12px;height:12px;background:#e8edf3"></i>
<i style="left:291px;top:309px;width:12px;height:12px;background:#e5eaf0"></i>
<i style="left:303px;top:309px;width:12px;height:12px;background:#dfe4ea"></i>
<i style="left:315px;top:309px;width:12px;height:12px;background:#e2e7ed"></i>
<i style="left:327px;top:309px;width:12px;height:12px;background:#dfe4ea"></i>
<i style="left:339px;top:309px;width:12px;height:12px;background:#e7ecf2"></i>
<i style="left:351px;top:309px;width:12px;height:12px;background:#ecf1f7"></i>
<i style="left:363px;top:309px;width:12px;height:12px;background:#e1e6ec"></i>
<i style="left:375px;top:309px;width:12px;height:12px;background:#e3e8ee"></i>
<i style="left:387px;top:309px;width:12px;height:12px;background:#e5eaf0"></i>
<i style="left:399px;top:309px;width:12px;height:12px;background:#e1e6ec"></i>
<i style="left:411px;top:309px;width:12px;height:12px;background:#e7ecf2"></i>
<i style="left:423px;top:309px;width:12px;height:12px;background:#e0e5eb"></i>
<i style="left:435px;top:309px;width:12px;height:12px;background:#e8edf3"></i>
<i style="left:447px;top:309px;width:12px;height:12px;background:#e3e8ee"></i>
<i style="left:459px;top:309px;width:12px;height:12px;background:#e7ecf2"></i>
<i style="left:471px;top:309px;width:12px;height:12px;background:#ecf1f7"></i>
<i style="left:483px;top:309px;width:12px;height:12px;background:#e9eef4"></i>
<i style="left:495px;top:309px;width:12px;height:12px;background:#e1e6ec"></i>
<i style="left:507px;top:309px;width:12px;height:12px;background:#e0e5eb"></i>
<i style="left:519px;top:309px;width:12px;height:12px;background:#e8edf3"></i>
<i style="left:531px;top:309px;width:12px;height:12px;background:#e8edf3"></i>
<i style="left:543px;top:309px;width:12px;height:12px;background:#e9eef4"></i>
<i style="left:555px;top:309px;width:5px;height:12px;background:#e2e7ed"></i>
<i style="left:201px;top:321px;width:6px;height:12px;background:#c1c5cc"></i>
<i style="left:207px;top:321px;width:12px;height:12px;background:#bdc1c8"></i>
<i style="left:219px;top:321px;width:12px;height:12px;background:#c4c8cf"></i>
<i style="left:231px;top:321px;width:12px;height:12px;background:#c7cbd2"></i>
<i style="left:243px;top:321px;width:12px;height:12px;background:#bdc1c8"></i>
<i style="left:255px;top:321px;width:12px;height:12px;background:#c5c9d0"></i>
<i style="left:267px;top:321px;width:12px;height:12px;background:#bcc0c7"></i>
<i style="left:279px;top:321px;width:12px;height:12px;background:#c5c9d0"></i>
<i style="left:291px;top:321px;width:12px;height:12px;background:#bfc3ca"></i>
<i style="left:303px;top:321px;width:12px;height:12px;background:#c3c7ce"></i>
<i style="left:315px;top:321px;width:12px;height:12px;background:#c6cad1"></i>
<i style="left:327px;top:321px;width:12px;height:12px;background:#c4c8cf"></i>
<i style="left:339px;top:321px;width:12px;height:12px;background:#c2c6cd"></i>
<i style="left:351px;top:321px;width:12px;height:12px;background:#c8ccd3"></i>
<i style="left:363px;top:321px;width:12px;height:12px;background:#c1c5cc"></i>
<i style="left:375px;top:321px;width:12px;height:12px;background:#c3c7ce"></i>
<i style="left:387px;top:321px;width:12px;height:12px;background:#c5c9d0"></i>
<i style="left:399px;top:321px;width:12px;height:12px;background:#caced5"></i>
<i style="left:411px;top:321px;width:12px;height:12px;background:#c3c7ce"></i>
<i style="left:423px;top:321px;width:12px;height:12px;background:#c1c5cc"></i>
<i style="left:435px;top:321px;width:12px;height:12px;background:#c0c4cb"></i>
<i style="left:447px;top:321px;width:12px;height:12px;background:#bfc3ca"></i>
<i style="left:459px;top:321px;width:12px;height:12px;background:#c8ccd3"></i>
<i style="left:471px;top:321px;width:12px;height:12px;background:#bec2c9"></i>
<i style="left:483px;top:321px;width:12px;height:12px;background:#c7cbd2"></i>
<i style="left:495px;top:321px;width:12px;height:12px;background:#c8ccd3"></i>
<i style="left:507px;top:321px;width:12px;height:12px;background:#bfc3ca"></i>
<i style="left:519px;top:321px;width:12px;height:12px;background:#bdc1c8"></i>
<i style="left:531px;top:321px;width:12px;height:12px;background:#c5c9d0"></i>
<i style="left:543px;top:321px;width:12px;height:12px;background:#c0c4cb"></i>
<i style="left:201px;top:333px;width:6px;height:12px;background:#ddd1b1"></i>
<i style="left:207px;top:333px;width:12px;height:12px;background:#dcd0b0"></i>
<i style="left:219px;top:333px;width:12px;height:12px;background:#e3d7b7"></i>
<i style="left:231px;top:333px;width:12px;height:12px;background:#daceae"></i>
<i style="left:243px;top:333px;width:12px;height:12px;background:#e0d4b4"></i>
<i style="left:255px;top:333px;width:12px;height:12px;background:#dcd0b0"></i>
<i style="left:267px;top:333px;width:12px;height:12px;background:#d9cdad"></i>
<i style="left:279px;top:333px;width:12px;height:12px;background:#ded2b2"></i>
<i style="left:291px;top:333px;width:12px;height:12px;background:#d6caaa"></i>
<i style="left:303px;top:333px;width:12px;height:12px;background:#d6caaa"></i>
<i style="left:315px;top:333px;width:12px;height:12px;background:#ddd1b1"></i>
<i style="left:327px;top:333px;width:12px;height:12px;background:#dbcfaf"></i>
<i style="left:339px;top:333px;width:12px;height:12px;background:#d7cbab"></i>
<i style="left:351px;top:333px;width:12px;height:12px;background:#e1d5b5"></i>
<i style="left:363px;top:333px;width:12px;height:12px;background:#daceae"></i>
<i style="left:375px;top:333px;width:12px;height:12px;background:#d7cbab"></i>
<i style="left:387px;top:333px;width:12px;height:12px;background:#e3d7b7"></i>
<i style="left:399px;top:333px;width:12px;height:12px;background:#dcd0b0"></i>
<i style="left:411px;top:333px;width:12px;height:12px;background:#dbcfaf"></i>
<i style="left:423px;top:333px;width:12px;height:12px;background:#d5c9a9"></i>
<i style="left:435px;top:333px;width:12px;height:12px;background:#dfd3b3"></i>
<i style="left:447px;top:333px;width:12px;height:12px;background:#d6caaa"></i>
<i style="left:459px;top:333px;width:12px;height:12px;background:#e1d5b5"></i>
<i style="left:471px;top:333px;width:12px;height:12px;background:#ddd1b1"></i>
<i style="left:483px;top:333px;width:12px;height:12px;background:#ded2b2"></i>
<i style="left:495px;top:333px;width:12px;height:12px;background:#e1d5b5"></i>
<i style="left:507px;top:333px;width:12px;height:12px;background:#e3d7b7"></i>
<i style="left:519px;top:333px;width:12px;height:12px;background:#e2d6b6"></i>
<i style="left:531px;top:333px;width:12px;height:12px;background:#daceae"></i>
<i style="left:543px;top:333px;width:12px;height:12px;background:#daceae"></i>
<i style="left:201px;top:345px;width:6px;height:12px;background:#eae4d0"></i>
<i style="left:207px;top:345px;width:12px;height:12px;background:#e4deca"></i>
<i style="left:219px;top:345px;width:12px;height:12px;background:#e8e2ce"></i>
<i style="left:231px;top:345px;width:12px;height:12px;background:#e6e0cc"></i>
<i style="left:243px;top:345px;width:12px;height:12px;background:#e8e2ce"></i>
<i style="left:255px;top:345px;width:12px;height:12px;background:#ebe5d1"></i>
<i style="left:267px;top:345px;width:12px;height:12px;background:#e6e0cc"></i>
<i style="left:279px;top:345px;width:12px;height:12px;background:#e0dac6"></i>
<i style="left:291px;top:345px;width:12px;height:12px;background:#ece6d2"></i>
<i style="left:303px;top:345px;width:12px;height:12px;background:#e0dac6"></i>
<i style="left:315px;top:345px;width:12px;height:12px;background:#e3ddc9"></i>
<i style="left:327px;top:345px;width:12px;height:12px;background:#e6e0cc"></i>
<i style="left:339px;top:345px;width:12px;height:12px;background:#eae4d0"></i>
<i style="left:351px;top:345px;width:12px;height:12px;background:#e9e3cf"></i>
<i style="left:363px;top:345px;width:12px;height:12px;background:#e0dac6"></i>
<i style="left:375px;top:345px;width:12px;height:12px;background:#dfd9c5"></i>
<i style="left:387px;top:345px;width:12px;height:12px;background:#eae4d0"></i>
<i style="left:399px;top:345px;width:12px;height:12px;background:#eae4d0"></i>
<i style="left:411px;top:345px;width:12px;height:12px;background:#e3ddc9"></i>
<i style="left:423px;top:345px;width:12px;height:12px;background:#e9e3cf"></i>
<i style="left:435px;top:345px;width:12px;height:12px;background:#e8e2ce"></i>
<i style="left:447px;top:345px;width:12px;height:12px;background:#e9e3cf"></i>
<i style="left:459px;top:345px;width:12px;height:12px;background:#ece6d2"></i>
<i style="left:471px;top:345px;width:12px;height:12px;background:#e6e0cc"></i>
<i style="left:483px;top:345px;width:12px;height:12px;background:#e3ddc9"></i>
<i style="left:495px;top:345px;width:12px;height:12px;background:#eae4d0"></i>
<i style="left:507px;top:345px;width:12px;height:12px;background:#e5dfcb"></i>
<i style="left:519px;top:345px;width:12px;height:12px;background:#ede7d3"></i>
<i style="left:531px;top:345px;width:12px;height:12px;background:#e9e3cf"></i>
<i style="left:543px;top:345px;width:12px;height:12px;background:#e4deca"></i>
<i style="left:555px;top:345px;width:5px;height:12px;background:#dfd9c5"></i>
<i style="left:201px;top:357px;width:6px;height:12px;background:#c3c7ce"></i>
<i style="left:207px;top:357px;width:12px;height:12px;background:#c1c5cc"></i>
<i style="left:219px;top:357px;width:12px;height:12px;background:#bec2c9"></i>
<i style="left:231px;top:357px;width:12px;height:12px;background:#c5c9d0"></i>
<i style="left:243px;top:357px;width:12px;height:12px;background:#bdc1c8"></i>
<i style="left:255px;top:357px;width:12px;height:12px;background:#c3c7ce"></i>
<i style="left:267px;top:357px;width:12px;height:12px;background:#bcc0c7"></i>
<i style="left:279px;top:357px;width:12px;height:12px;background:#bfc3ca"></i>
<i style="left:291px;top:357px;width:12px;height:12px;background:#c8ccd3"></i>
<i style="left:303px;top:357px;width:12px;height:12px;background:#c0c4cb"></i>
<i style="left:315px;top:357px;width:24px;height:12px;background:#e6ebf1"></i>
<i style="left:201px;top:369px;width:6px;height:12px;background:#d7d8db"></i>
<i style="left:207px;top:369px;width:12px;height:12px;background:#e0e1e4"></i>
<i style="left:219px;top:369px;width:12px;height:12px;background:#d8d9dc"></i>
<i style="left:231px;top:369px;width:12px;height:12px;background:#dbdcdf"></i>
<i style="left:243px;top:369px;width:12px;height:12px;background:#dbdcdf"></i>
<i style="left:255px;top:369px;width:12px;height:12px;background:#e3e4e7"></i>
<i style="left:267px;top:369px;width:12px;height:12px;background:#e2e3e6"></i>
<i style="left:279px;top:369px;width:12px;height:12px;background:#dcdde0"></i>
<i style="left:291px;top:369px;width:12px;height:12px;background:#d6d7da"></i>
<i style="left:303px;top:369px;width:12px;height:12px;background:#d7d8db"></i>
<i style="left:315px;top:369px;width:12px;height:12px;background:#dcdde0"></i>
<i style="left:327px;top:369px;width:12px;height:12px;background:#dbdcdf"></i>
<i style="left:201px;top:381px;width:6px;height:12px;background:#dddee1"></i>
<i style="left:207px;top:381px;width:12px;height:12px;background:#d9dadd"></i>
<i style="left:219px;top:381px;width:12px;height:12px;background:#e3e4e7"></i>
<i style="left:231px;top:381px;width:12px;height:12px;background:#d7d8db"></i>
<i style="left:243px;top:381px;width:12px;height:12px;background:#e2e3e6"></i>
<i style="left:255px;top:381px;width:12px;height:12px;background:#dbdcdf"></i>
<i style="left:267px;top:381px;width:12px;height:12px;background:#e2e3e6"></i>
<i style="left:279px;top:381px;width:12px;height:12px;background:#dddee1"></i>
<i style="left:291px;top:381px;width:12px;height:12px;background:#d9dadd"></i>
<i style="left:303px;top:381px;width:12px;height:12px;background:#e0e1e4"></i>
<i style="left:315px;top:381px;width:12px;height:12px;background:#dbdcdf"></i>
<i style="left:327px;top:381px;width:12px;height:12px;background:#dadbde"></i>
<i style="left:201px;top:393px;width:6px;height:12px;background:#c6cad1"></i>
<i style="left:207px;top:393px;width:12px;height:12px;background:#caced5"></i>
<i style="left:219px;top:393px;width:12px;height:12px;background:#c2c6cd"></i>
<i style="left:231px;top:393px;width:12px;height:12px;background:#bfc3ca"></i>
<i style="left:243px;top:393px;width:12px;height:12px;background:#bec2c9"></i>
<i style="left:255px;top:393px;width:12px;height:12px;background:#bdc1c8"></i>
<i style="left:267px;top:393px;width:12px;height:12px;background:#bec2c9"></i>
<i style="left:279px;top:393px;width:12px;height:12px;background:#bec2c9"></i>
<i style="left:291px;top:393px;width:12px;height:12px;background:#bfc3ca"></i>
<i style="left:303px;top:393px;width:12px;height:12px;background:#c6cad1"></i>
<i style="left:315px;top:393px;width:12px;height:12px;background:#bfc3ca"></i>
<i style="left:327px;top:393px;width:12px;height:12px;background:#bcc0c7"></i>
<i style="left:339px;top:393px;width:12px;height:12px;background:#c3c7ce"></i>
<i style="left:351px;top:393px;width:12px;height:12px;background:#c9cdd4"></i>
<i style="left:363px;top:393px;width:12px;height:12px;background:#c5c9d0"></i>
<i style="left:375px;top:393px;width:12px;height:12px;background:#bec2c9"></i>
<i style="left:387px;top:393px;width:12px;height:12px;background:#e6ebf1"></i>
<i style="left:201px;top:405px;width:6px;height:12px;background:#dfe1e3"></i>
<i style="left:207px;top:405px;width:12px;height:12px;background:#dfe1e3"></i>
<i style="left:219px;top:405px;width:12px;height:12px;background:#dbdddf"></i>
<i style="left:231px;top:405px;width:12px;height:12px;background:#dddfe1"></i>
<i style="left:243px;top:405px;width:12px;height:12px;background:#e1e3e5"></i>
<i style="left:255px;top:405px;width:12px;height:12px;background:#e3e5e7"></i>
<i style="left:267px;top:405px;width:12px;height:12px;background:#e0e2e4"></i>
<i style="left:279px;top:405px;width:12px;height:12px;background:#e4e6e8"></i>
<i style="left:291px;top:405px;width:12px;height:12px;background:#e4e6e8"></i>
<i style="left:303px;top:405px;width:12px;height:12px;background:#e0e2e4"></i>
<i style="left:315px;top:405px;width:12px;height:12px;background:#dddfe1"></i>
<i style="left:201px;top:417px;width:6px;height:12px;background:#e0e1e4"></i>
<i style="left:207px;top:417px;width:12px;height:12px;background:#e2e3e6"></i>
<i style="left:219px;top:417px;width:12px;height:12px;background:#dddee1"></i>
<i style="left:231px;top:417px;width:12px;height:12px;background:#dedfe2"></i>
<i style="left:243px;top:417px;width:12px;height:12px;background:#dfe0e3"></i>
<i style="left:255px;top:417px;width:12px;height:12px;background:#dfe0e3"></i>
<i style="left:267px;top:417px;width:12px;height:12px;background:#e0e1e4"></i>
<i style="left:279px;top:417px;width:12px;height:12px;background:#d5d6d9"></i>
<i style="left:291px;top:417px;width:12px;height:12px;background:#dcdde0"></i>
<i style="left:303px;top:417px;width:12px;height:12px;background:#e3e4e7"></i>
<i style="left:315px;top:417px;width:12px;height:12px;background:#e2e3e6"></i>
<i style="left:201px;top:429px;width:6px;height:12px;background:#c8ccd3"></i>
<i style="left:207px;top:429px;width:12px;height:12px;background:#c9cdd4"></i>
<i style="left:219px;top:429px;width:12px;height:12px;background:#c6cad1"></i>
<i style="left:231px;top:429px;width:12px;height:12px;background:#c8ccd3"></i>
<i style="left:243px;top:429px;width:12px;height:12px;background:#c4c8cf"></i>
<i style="left:255px;top:429px;width:12px;height:12px;background:#c2c6cd"></i>
<i style="left:267px;top:429px;width:12px;height:12px;background:#c2c6cd"></i>
<i style="left:279px;top:429px;width:12px;height:12px;background:#c2c6cd"></i>
<i style="left:291px;top:429px;width:12px;height:12px;background:#c2c6cd"></i>
<i style="left:303px;top:429px;width:12px;height:12px;background:#bdc1c8"></i>
<i style="left:315px;top:429px;width:12px;height:12px;background:#e6ebf1"></i>
<i style="left:201px;top:441px;width:6px;height:12px;background:#e2e4e6"></i>
<i style="left:207px;top:441px;width:12px;height:12px;background:#e5e7e9"></i>
<i style="left:219px;top:441px;width:12px;height:12px;background:#e1e3e5"></i>
<i style="left:231px;top:441px;width:12px;height:12px;background:#dbdddf"></i>
<i style="left:243px;top:441px;width:12px;height:12px;background:#dee0e2"></i>
<i style="left:255px;top:441px;width:12px;height:12px;background:#dcdee0"></i>
<i style="left:267px;top:441px;width:12px;height:12px;background:#dee0e2"></i>
<i style="left:279px;top:441px;width:12px;height:12px;background:#e2e4e6"></i>
<i style="left:291px;top:441px;width:12px;height:12px;background:#dddfe1"></i>
<i style="left:303px;top:441px;width:12px;height:12px;background:#dcdee0"></i>
<i style="left:315px;top:441px;width:12px;height:12px;background:#e0e2e4"></i>
<i style="left:327px;top:441px;width:12px;height:12px;background:#e4e6e8"></i>
<i style="left:339px;top:441px;width:12px;height:12px;background:#dbdddf"></i>
<i style="left:351px;top:441px;width:12px;height:12px;background:#dcdee0"></i>
<i style="left:363px;top:441px;width:12px;height:12px;background:#dbdddf"></i>
<i style="left:375px;top:441px;width:12px;height:12px;background:#e4e6e8"></i>
<i style="left:201px;top:453px;width:6px;height:12px;background:#cecfd1"></i>
<i style="left:207px;top:453px;width:12px;height:12px;background:#d4d5d7"></i>
<i style="left:219px;top:453px;width:12px;height:12px;background:#cdced0"></i>
<i style="left:231px;top:453px;width:12px;height:12px;background:#d1d2d4"></i>
<i style="left:243px;top:453px;width:12px;height:12px;background:#d5d6d8"></i>
<i style="left:255px;top:453px;width:12px;height:12px;background:#cccdcf"></i>
<i style="left:267px;top:453px;width:12px;height:12px;background:#cdced0"></i>
<i style="left:279px;top:453px;width:12px;height:12px;background:#d9dadc"></i>
<i style="left:291px;top:453px;width:12px;height:12px;background:#cfd0d2"></i>
<i style="left:303px;top:453px;width:12px;height:12px;background:#d5d6d8"></i>
<i style="left:315px;top:453px;width:12px;height:12px;background:#d2d3d5"></i>
<i style="left:327px;top:453px;width:12px;height:12px;background:#cecfd1"></i>
<i style="left:339px;top:453px;width:12px;height:12px;background:#d6d7d9"></i>
<i style="left:351px;top:453px;width:12px;height:12px;background:#d0d1d3"></i>
<i style="left:363px;top:453px;width:12px;height:12px;background:#d1d2d4"></i>
<i style="left:375px;top:453px;width:12px;height:12px;background:#d5d6d8"></i>
<i style="left:201px;top:465px;width:6px;height:12px;background:#c1c5cc"></i>
<i style="left:207px;top:465px;width:12px;height:12px;background:#c3c7ce"></i>
<i style="left:219px;top:465px;width:12px;height:12px;background:#bdc1c8"></i>
<i style="left:231px;top:465px;width:12px;height:12px;background:#bdc1c8"></i>
<i style="left:243px;top:465px;width:12px;height:12px;background:#c9cdd4"></i>
<i style="left:255px;top:465px;width:12px;height:12px;background:#c3c7ce"></i>
<i style="left:267px;top:465px;width:12px;height:12px;background:#c3c7ce"></i>
<i style="left:279px;top:465px;width:12px;height:12px;background:#c3c7ce"></i>
<i style="left:291px;top:465px;width:12px;height:12px;background:#c3c7ce"></i>
<i style="left:201px;top:477px;width:6px;height:12px;background:#dfe1e3"></i>
<i style="left:207px;top:477px;width:12px;height:12px;background:#dcdee0"></i>
<i style="left:219px;top:477px;width:12px;height:12px;background:#dddfe1"></i>
<i style="left:231px;top:477px;width:12px;height:12px;background:#dcdee0"></i>
<i style="left:243px;top:477px;width:12px;height:12px;background:#e6e8ea"></i>
<i style="left:255px;top:477px;width:12px;height:12px;background:#e0e2e4"></i>
<i style="left:267px;top:477px;width:12px;height:12px;background:#e6e8ea"></i>
<i style="left:279px;top:477px;width:12px;height:12px;background:#dfe1e3"></i>
<i style="left:291px;top:477px;width:12px;height:12px;background:#e2e4e6"></i>
<i style="left:303px;top:477px;width:12px;height:12px;background:#e8eaec"></i>
<i style="left:315px;top:477px;width:12px;height:12px;background:#e6e8ea"></i>
<i style="left:327px;top:477px;width:12px;height:12px;background:#e6ebf1"></i>
<i style="left:201px;top:489px;width:6px;height:12px;background:#cecfd1"></i>
<i style="left:207px;top:489px;width:12px;height:12px;background:#d4d5d7"></i>
<i style="left:219px;top:489px;width:12px;height:12px;background:#cccdcf"></i>
<i style="left:231px;top:489px;width:12px;height:12px;background:#cfd0d2"></i>
<i style="left:243px;top:489px;width:12px;height:12px;background:#d4d5d7"></i>
<i style="left:255px;top:489px;width:12px;height:12px;background:#d1d2d4"></i>
<i style="left:267px;top:489px;width:12px;height:12px;background:#cecfd1"></i>
<i style="left:279px;top:489px;width:12px;height:12px;background:#d7d8da"></i>
<i style="left:291px;top:489px;width:12px;height:12px;background:#d4d5d7"></i>
<i style="left:303px;top:489px;width:12px;height:12px;background:#dadbdd"></i>
<i style="left:315px;top:489px;width:12px;height:12px;background:#cccdcf"></i>
<i style="left:327px;top:489px;width:12px;height:12px;background:#e6ebf1"></i>
<i style="left:201px;top:501px;width:6px;height:12px;background:#c8ccd3"></i>
<i style="left:207px;top:501px;width:12px;height:12px;background:#c4c8cf"></i>
<i style="left:219px;top:501px;width:12px;height:12px;background:#c0c4cb"></i>
<i style="left:231px;top:501px;width:12px;height:12px;background:#c6cad1"></i>
<i style="left:243px;top:501px;width:12px;height:12px;background:#c9cdd4"></i>
<i style="left:255px;top:501px;width:12px;height:12px;background:#bdc1c8"></i>
<i style="left:267px;top:501px;width:12px;height:12px;background:#c7cbd2"></i>
<i style="left:279px;top:501px;width:12px;height:12px;background:#c9cdd4"></i>
<i style="left:291px;top:501px;width:12px;height:12px;background:#c0c4cb"></i>
<i style="left:303px;top:501px;width:12px;height:12px;background:#c4c8cf"></i>
<i style="left:315px;top:501px;width:12px;height:12px;background:#c1c5cc"></i>
<i style="left:201px;top:513px;width:6px;height:12px;background:#edf2f8"></i>
<i style="left:207px;top:513px;width:12px;height:12px;background:#e1e6ec"></i>
<i style="left:219px;top:513px;width:12px;height:12px;background:#e4e9ef"></i>
<i style="left:231px;top:513px;width:12px;height:12px;background:#ebf0f6"></i>
<i style="left:243px;top:513px;width:12px;height:12px;background:#e2e7ed"></i>
<i style="left:255px;top:513px;width:12px;height:12px;background:#e7ecf2"></i>
<i style="left:267px;top:513px;width:12px;height:12px;background:#e7ecf2"></i>
<i style="left:279px;top:513px;width:12px;height:12px;background:#ebf0f6"></i>
<i style="left:291px;top:513px;width:12px;height:12px;background:#e7ecf2"></i>
<i style="left:303px;top:513px;width:12px;height:12px;background:#e4e9ef"></i>
<i style="left:315px;top:513px;width:12px;height:12px;background:#e9eef4"></i>
<i style="left:201px;top:525px;width:6px;height:12px;background:#c4c3c2"></i>
<i style="left:207px;top:525px;width:12px;height:12px;background:#cac9c8"></i>
<i style="left:219px;top:525px;width:12px;height:12px;background:#cdcccb"></i>
<i style="left:231px;top:525px;width:12px;height:12px;background:#cdcccb"></i>
<i style="left:243px;top:525px;width:12px;height:12px;background:#cdcccb"></i>
<i style="left:255px;top:525px;width:12px;height:12px;background:#cecdcc"></i>
<i style="left:267px;top:525px;width:12px;height:12px;background:#c4c3c2"></i>
<i style="left:279px;top:525px;width:12px;height:12px;background:#cdcccb"></i>
<i style="left:291px;top:525px;width:12px;height:12px;background:#c4c3c2"></i>
<i style="left:303px;top:525px;width:12px;height:12px;background:#e6ebf1"></i>
<i style="left:201px;top:537px;width:6px;height:12px;background:#d3d9e0"></i>
<i style="left:207px;top:537px;width:12px;height:12px;background:#ccd2d9"></i>
<i style="left:219px;top:537px;width:12px;height:12px;background:#d1d7de"></i>
<i style="left:231px;top:537px;width:12px;height:12px;background:#d2d8df"></i>
<i style="left:243px;top:537px;width:12px;height:12px;background:#c9cfd6"></i>
<i style="left:255px;top:537px;width:12px;height:12px;background:#c9cfd6"></i>
<i style="left:267px;top:537px;width:12px;height:12px;background:#ced4db"></i>
<i style="left:279px;top:537px;width:12px;height:12px;background:#cdd3da"></i>
<i style="left:291px;top:537px;width:12px;height:12px;background:#cbd1d8"></i>
<i style="left:303px;top:537px;width:12px;height:12px;background:#e1e7ee"></i>
<i style="left:201px;top:549px;width:6px;height:12px;background:#dbdddf"></i>
<i style="left:207px;top:549px;width:12px;height:12px;background:#dbdddf"></i>
<i style="left:219px;top:549px;width:12px;height:12px;background:#e7e9eb"></i>
<i style="left:231px;top:549px;width:12px;height:12px;background:#dfe1e3"></i>
<i style="left:243px;top:549px;width:12px;height:12px;background:#e2e4e6"></i>
<i style="left:255px;top:549px;width:12px;height:12px;background:#dfe1e3"></i>
<i style="left:267px;top:549px;width:12px;height:12px;background:#dee0e2"></i>
<i style="left:279px;top:549px;width:12px;height:12px;background:#e6e8ea"></i>
<i style="left:291px;top:549px;width:12px;height:12px;background:#e4e6e8"></i>
<i style="left:303px;top:549px;width:12px;height:12px;background:#f0f2f4"></i>
<i style="left:201px;top:561px;width:6px;height:12px;background:#c8c7c6"></i>
<i style="left:207px;top:561px;width:12px;height:12px;background:#cdcccb"></i>
<i style="left:219px;top:561px;width:12px;height:12px;background:#cfcecd"></i>
<i style="left:231px;top:561px;width:12px;height:12px;background:#cccbca"></i>
<i style="left:243px;top:561px;width:12px;height:12px;background:#c6c5c4"></i>
<i style="left:255px;top:561px;width:12px;height:12px;background:#c6c5c4"></i>
<i style="left:267px;top:561px;width:12px;height:12px;background:#c2c1c0"></i>
<i style="left:279px;top:561px;width:12px;height:12px;background:#c4c3c2"></i>
<i style="left:291px;top:561px;width:12px;height:12px;background:#c2c1c0"></i>
<i style="left:303px;top:561px;width:12px;height:12px;background:#d4d3d2"></i>
<i style="left:201px;top:573px;width:6px;height:12px;background:#cdd3da"></i>
<i style="left:207px;top:573px;width:12px;height:12px;background:#c9cfd6"></i>
<i style="left:219px;top:573px;width:12px;height:12px;background:#cbd1d8"></i>
<i style="left:231px;top:573px;width:12px;height:12px;background:#c9cfd6"></i>
<i style="left:243px;top:573px;width:12px;height:12px;background:#cdd3da"></i>
<i style="left:255px;top:573px;width:12px;height:12px;background:#cfd5dc"></i>
<i style="left:267px;top:573px;width:12px;height:12px;background:#d4dae1"></i>
<i style="left:279px;top:573px;width:12px;height:12px;background:#cfd5dc"></i>
<i style="left:291px;top:573px;width:12px;height:12px;background:#d3d9e0"></i>
<i style="left:303px;top:573px;width:12px;height:12px;background:#d6dce3"></i>
<i style="left:201px;top:585px;width:6px;height:12px;background:#e2e4e6"></i>
<i style="left:207px;top:585px;width:12px;height:12px;background:#e9ebed"></i>
<i style="left:219px;top:585px;width:12px;height:12px;background:#e5e7e9"></i>
<i style="left:231px;top:585px;width:12px;height:12px;background:#e0e2e4"></i>
<i style="left:243px;top:585px;width:12px;height:12px;background:#e7e9eb"></i>
<i style="left:255px;top:585px;width:12px;height:12px;background:#e5e7e9"></i>
<i style="left:267px;top:585px;width:12px;height:12px;background:#dcdee0"></i>
<i style="left:279px;top:585px;width:12px;height:12px;background:#e8eaec"></i>
<i style="left:291px;top:585px;width:12px;height:12px;background:#e5e7e9"></i>
<i style="left:303px;top:585px;width:12px;height:12px;background:#eceef0"></i>
<i style="left:201px;top:597px;width:6px;height:12px;background:#cfcecd"></i>
<i style="left:207px;top:597px;width:12px;height:12px;background:#c7c6c5"></i>
<i style="left:219px;top:597px;width:12px;height:12px;background:#cdcccb"></i>
<i style="left:231px;top:597px;width:12px;height:12px;background:#cccbca"></i>
<i style="left:243px;top:597px;width:12px;height:12px;background:#cdcccb"></i>
<i style="left:255px;top:597px;width:12px;height:12px;background:#c4c3c2"></i>
<i style="left:267px;top:597px;width:12px;height:12px;background:#c8c7c6"></i>
<i style="left:279px;top:597px;width:12px;height:12px;background:#cfcecd"></i>
<i style="left:291px;top:597px;width:12px;height:12px;background:#c3c2c1"></i>
<i style="left:303px;top:597px;width:12px;height:12px;background:#d7d6d5"></i>
<i style="left:201px;top:609px;width:6px;height:12px;background:#d2d8df"></i>
<i style="left:207px;top:609px;width:12px;height:12px;background:#d0d6dd"></i>
<i style="left:219px;top:609px;width:12px;height:12px;background:#cbd1d8"></i>
<i style="left:231px;top:609px;width:12px;height:12px;background:#c7cdd4"></i>
<i style="left:243px;top:609px;width:12px;height:12px;background:#d2d8df"></i>
<i style="left:255px;top:609px;width:12px;height:12px;background:#d1d7de"></i>
<i style="left:267px;top:609px;width:12px;height:12px;background:#ccd2d9"></i>
<i style="left:279px;top:609px;width:12px;height:12px;background:#cdd3da"></i>
<i style="left:291px;top:609px;width:12px;height:12px;background:#ccd2d9"></i>
<i style="left:303px;top:609px;width:12px;height:12px;background:#e1e7ee"></i>
<i style="left:201px;top:621px;width:6px;height:12px;background:#dcdee0"></i>
<i style="left:207px;top:621px;width:12px;height:12px;background:#e6e8ea"></i>
<i style="left:219px;top:621px;width:12px;height:12px;background:#dddfe1"></i>
<i style="left:231px;top:621px;width:12px;height:12px;background:#dddfe1"></i>
<i style="left:243px;top:621px;width:12px;height:12px;background:#dddfe1"></i>
<i style="left:255px;top:621px;width:12px;height:12px;background:#dbdddf"></i>
<i style="left:267px;top:621px;width:12px;height:12px;background:#dddfe1"></i>
<i style="left:279px;top:621px;width:12px;height:12px;background:#e4e6e8"></i>
<i style="left:291px;top:621px;width:12px;height:12px;background:#e9ebed"></i>
<i style="left:303px;top:621px;width:12px;height:12px;background:#f2f4f6"></i>
<i style="left:201px;top:633px;width:6px;height:12px;background:#cdcccb"></i>
<i style="left:207px;top:633px;width:12px;height:12px;background:#cbcac9"></i>
<i style="left:219px;top:633px;width:12px;height:12px;background:#c3c2c1"></i>
<i style="left:231px;top:633px;width:12px;height:12px;background:#cac9c8"></i>
<i style="left:243px;top:633px;width:12px;height:12px;background:#cecdcc"></i>
<i style="left:255px;top:633px;width:12px;height:12px;background:#cac9c8"></i>
<i style="left:267px;top:633px;width:12px;height:12px;background:#c8c7c6"></i>
<i style="left:279px;top:633px;width:12px;height:12px;background:#cbcac9"></i>
<i style="left:291px;top:633px;width:12px;height:12px;background:#cfcecd"></i>
<i style="left:303px;top:633px;width:12px;height:12px;background:#d6d5d4"></i>
<i style="left:201px;top:645px;width:6px;height:12px;background:#c8ced5"></i>
<i style="left:207px;top:645px;width:12px;height:12px;background:#ced4db"></i>
<i style="left:219px;top:645px;width:12px;height:12px;background:#ced4db"></i>
<i style="left:231px;top:645px;width:12px;height:12px;background:#c8ced5"></i>
<i style="left:243px;top:645px;width:12px;height:12px;background:#c6ccd3"></i>
<i style="left:255px;top:645px;width:12px;height:12px;background:#c6ccd3"></i>
<i style="left:267px;top:645px;width:12px;height:12px;background:#d2d8df"></i>
<i style="left:279px;top:645px;width:12px;height:12px;background:#d1d7de"></i>
<i style="left:291px;top:645px;width:12px;height:12px;background:#d0d6dd"></i>
<i style="left:303px;top:645px;width:12px;height:12px;background:#d7dde4"></i>
<i style="left:201px;top:657px;width:6px;height:12px;background:#e3e5e7"></i>
<i style="left:207px;top:657px;width:12px;height:12px;background:#e6e8ea"></i>
<i style="left:219px;top:657px;width:12px;height:12px;background:#e9ebed"></i>
<i style="left:231px;top:657px;width:12px;height:12px;background:#dddfe1"></i>
<i style="left:243px;top:657px;width:12px;height:12px;background:#e1e3e5"></i>
<i style="left:255px;top:657px;width:12px;height:12px;background:#e8eaec"></i>
<i style="left:267px;top:657px;width:12px;height:12px;background:#dee0e2"></i>
<i style="left:279px;top:657px;width:12px;height:12px;background:#e8eaec"></i>
<i style="left:291px;top:657px;width:12px;height:12px;background:#e8eaec"></i>
<i style="left:303px;top:657px;width:12px;height:12px;background:#eef0f2"></i>
<i style="left:201px;top:669px;width:6px;height:10px;background:#c1c0bf"></i>
<i style="left:207px;top:669px;width:12px;height:10px;background:#c5c4c3"></i>
<i style="left:219px;top:669px;width:12px;height:10px;background:#c4c3c2"></i>
<i style="left:231px;top:669px;width:12px;height:10px;background:#c5c4c3"></i>
<i style="left:243px;top:669px;width:12px;height:10px;background:#c9c8c7"></i>
<i style="left:255px;top:669px;width:12px;height:10px;background:#c4c3c2"></i>
<i style="left:267px;top:669px;width:12px;height:10px;background:#cdcccb"></i>
<i style="left:279px;top:669px;width:12px;height:10px;background:#cac9c8"></i>
<i style="left:291px;top:669px;width:12px;height:10px;background:#c6c5c4"></i>
<i style="left:303px;top:669px;width:12px;height:10px;background:#d5d4d3"></i>
<i style="left:139px;top:278px;width:18px;height:7px;background:#e9eef4"></i>
<i style="left:157px;top:278px;width:14px;height:7px;background:#edf2f8"></i>
<i style="left:139px;top:319px;width:18px;height:12px;background:#c4c8cf"></i>
<i style="left:157px;top:319px;width:14px;height:12px;background:#edf2f8"></i>
<i style="left:139px;top:331px;width:18px;height:12px;background:#d9cdad"></i>
<i style="left:157px;top:331px;width:14px;height:12px;background:#e6e0cc"></i>
<i style="left:139px;top:343px;width:18px;height:12px;background:#e1dbc7"></i>
<i style="left:157px;top:343px;width:14px;height:12px;background:#e6e0cc"></i>
<i style="left:139px;top:367px;width:18px;height:12px;background:#e2e4e6"></i>
<i style="left:157px;top:367px;width:14px;height:12px;background:#e2e4e6"></i>
<i style="left:139px;top:379px;width:18px;height:12px;background:#dedfe2"></i>
<i style="left:157px;top:379px;width:14px;height:12px;background:#edf2f8"></i>
<i style="left:139px;top:535px;width:18px;height:12px;background:#d2d8df"></i>
<i style="left:157px;top:535px;width:14px;height:12px;background:#edf2f8"></i>
<i style="left:139px;top:547px;width:18px;height:12px;background:#e6e8ea"></i>
<i style="left:157px;top:547px;width:14px;height:12px;background:#edf2f8"></i>
<i style="left:139px;top:559px;width:18px;height:12px;background:#cbcac9"></i>
<i style="left:157px;top:559px;width:14px;height:12px;background:#edf2f8"></i>
<i style="left:139px;top:571px;width:18px;height:12px;background:#ced4db"></i>
<i style="left:157px;top:571px;width:14px;height:12px;background:#edf2f8"></i>
<i style="left:139px;top:583px;width:18px;height:12px;background:#e5e7e9"></i>
<i style="left:157px;top:583px;width:14px;height:12px;background:#edf2f8"></i>
<i style="left:139px;top:595px;width:18px;height:12px;background:#c5c4c3"></i>
<i style="left:157px;top:595px;width:14px;height:12px;background:#edf2f8"></i>
<i style="left:139px;top:607px;width:18px;height:12px;background:#d0d6dd"></i>
<i style="left:157px;top:607px;width:14px;height:12px;background:#edf2f8"></i>
<i style="left:139px;top:619px;width:18px;height:12px;background:#dfe1e3"></i>
<i style="left:157px;top:619px;width:14px;height:12px;background:#edf2f8"></i>
<i style="left:139px;top:631px;width:18px;height:12px;background:#cbcac9"></i>
<i style="left:157px;top:631px;width:14px;height:12px;background:#edf2f8"></i>
<i style="left:139px;top:643px;width:18px;height:12px;background:#d0d6dd"></i>
<i style="left:157px;top:643px;width:14px;height:12px;background:#edf2f8"></i>
<i style="left:139px;top:655px;width:18px;height:12px;background:#dddfe1"></i>
<i style="left:157px;top:655px;width:14px;height:12px;background:#edf2f8"></i>
<i style="left:139px;top:667px;width:18px;height:12px;background:#cac9c8"></i>
<i style="left:157px;top:667px;width:14px;height:12px;background:#edf2f8"></i>
</div>
<!-- totals -->
<i style="left:15.5px;top:679px;width:1233.5px;height:2px;background:#fbfbfb"></i>
<i style="left:15.5px;top:681px;width:1233.5px;height:2.5px;background:#a9a9a9"></i>
<i style="left:15.5px;top:683.5px;width:1233.5px;height:18.8px;background:#eef6fe;border-bottom:1px solid #dcdfe3"></i>
<i style="left:15.5px;top:702.3px;width:1233.5px;height:19px;background:#f8f9fa;border-bottom:1px solid #dcdcdc"></i>
<i class="vl" style="left:82.0px;top:683.5px;height:38px"></i><i class="vl" style="left:132.8px;top:683.5px;height:38px"></i><i class="vl" style="left:194.1px;top:683.5px;height:38px"></i><i class="vl" style="left:563.9px;top:683.5px;height:38px"></i><i class="vl" style="left:639.1px;top:683.5px;height:38px"></i><i class="vl" style="left:767.3px;top:683.5px;height:38px"></i><i class="vl" style="left:818.3px;top:683.5px;height:38px"></i><i class="vl" style="left:909.1px;top:683.5px;height:38px"></i><i class="vl" style="left:985.7px;top:683.5px;height:38px"></i><i class="vl" style="left:1147.1px;top:683.5px;height:38px"></i><i class="vl" style="left:1236.4px;top:683.5px;height:38px"></i>
<div class="a" style="left:20px;top:687px;font-size:12.5px;font-weight:bold;color:#111;line-height:14px">Total</div>
<div class="a" style="left:19.5px;top:706px;font-size:12.5px;font-weight:bold;color:#f0922a;line-height:14px;letter-spacing:-0.5px">Sélection</div>
<div class="a r" style="left:768px;width:49px;top:687px;font-size:12.5px;font-weight:bold;color:#111;line-height:14px">0,00</div>
<div class="a r" style="left:768px;width:49px;top:706px;font-size:12.5px;font-weight:bold;color:#f0922a;line-height:14px">0,00</div>
<div class="a r" style="left:1000px;width:145px;top:687px;font-size:12.5px;font-weight:bold;color:#111;line-height:14px">0,00</div>
<div class="a r" style="left:1000px;width:145px;top:706px;font-size:12.5px;font-weight:bold;color:#f0922a;line-height:14px">0,00</div>
<i style="left:15.5px;top:721.5px;width:1249px;height:17.5px;background:#f0f0f0"></i>
<i style="left:33px;top:729px;width:619px;height:2.5px;background:#8a8a8a;border-radius:1px"></i>
<!-- red box -->
<div class="a" style="left:645px;top:249px;width:179px;height:435px;border:2px solid #f01010;box-shadow:inset 3px 3px 5px rgba(0,0,0,0.12),2px 2px 4px rgba(0,0,0,0.18)"></div>
</body></html>
